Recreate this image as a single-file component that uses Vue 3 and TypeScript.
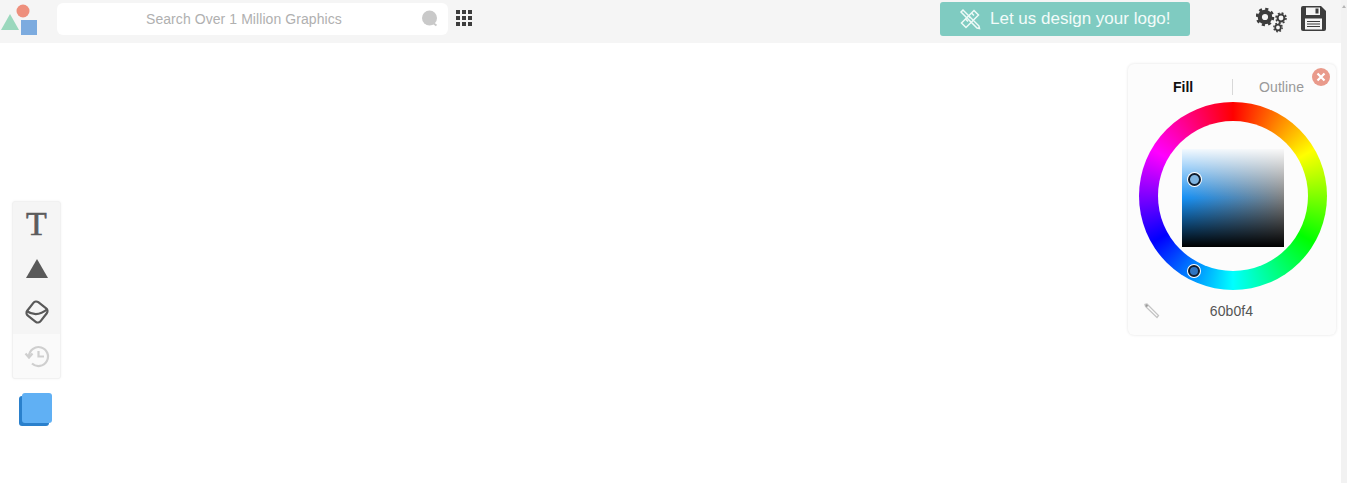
<template>
  <div class="page">
    <!-- top bar -->
    <header class="topbar">
      <svg class="logo" width="38" height="36" viewBox="0 0 38 36">
        <circle cx="23" cy="11" r="6.5" fill="#ee8f7c" />
        <polygon points="1,30 19,30 10,14" fill="#9bd8bd" />
        <rect x="21" y="20" width="16" height="15" fill="#7cabdf" />
      </svg>
      <div class="search">
        <span class="search-text">Search Over 1 Million Graphics</span>
        <svg class="search-icon" width="18" height="18" viewBox="0 0 18 18">
          <circle cx="8.5" cy="8" r="7.5" fill="#c9c9c9" />
          <path d="M12 13 L15.5 15.5" stroke="#c9c9c9" stroke-width="2" />
        </svg>
      </div>
      <div class="grid-icon">
        <i v-for="n in 9" :key="n"></i>
      </div>
      <button class="cta">
        <svg width="22" height="22" viewBox="0 0 22 22" fill="none" stroke="#eefaf7" stroke-width="1.5">
          <path d="M2 4 L4 2 L20 18 L20.5 20.5 L18 20 Z" />
          <path d="M15 2.5 L19.5 7 L7 19.5 L2.5 15 Z" />
          <path d="M12.5 5 L15 7.5 M9.5 8 L11.5 10 M6.5 11 L9 13.5" />
        </svg>
        <span>Let us design your logo!</span>
      </button>
      <svg class="gears" width="32" height="27" viewBox="0 0 32 27">
        <g fill="none" stroke="#3d3d3d">
          <circle cx="9" cy="11" r="5.2" stroke-width="4.2" />
          <circle cx="9" cy="11" r="8" stroke-width="2.6" stroke-dasharray="3.1 3.18" />
          <circle cx="25" cy="12" r="3.4" stroke-width="2" />
          <circle cx="25" cy="12" r="5" stroke-width="1.6" stroke-dasharray="2 1.93" />
          <circle cx="22" cy="21.5" r="2.8" stroke-width="1.8" />
          <circle cx="22" cy="21.5" r="4.2" stroke-width="1.4" stroke-dasharray="1.65 1.65" />
        </g>
      </svg>
      <svg class="save" width="25" height="25" viewBox="0 0 25 25">
        <path d="M2 0 H20 L25 5 V23 Q25 25 23 25 H2 Q0 25 0 23 V2 Q0 0 2 0 Z" fill="#3d3d3d" />
        <rect x="5" y="1.5" width="14" height="7.5" fill="#f5f5f5" />
        <rect x="14.5" y="2.5" width="3" height="5" fill="#3d3d3d" />
        <rect x="4" y="12.5" width="17" height="11" fill="#f5f5f5" />
        <path d="M6 15.5 H19 M6 18 H19 M6 20.5 H19" stroke="#3d3d3d" stroke-width="1.2" />
      </svg>
    </header>

    <!-- canvas area -->
    <main class="workspace">
      <aside class="side">
        <div class="tools">
          <div class="tool">
            <span class="tool-t">T</span>
          </div>
          <div class="tool">
            <svg width="22" height="19" viewBox="0 0 22 19"><polygon points="0,19 22,19 11,0" fill="#595959" /></svg>
          </div>
          <div class="tool">
            <svg width="26" height="26" viewBox="0 0 26 26" fill="none" stroke="#595959" stroke-width="2.2">
              <rect x="4.5" y="4.5" width="17" height="17" rx="3.5" transform="rotate(38 13 13)" />
              <path d="M2.5 12 Q13 19 23.5 10" />
            </svg>
          </div>
          <div class="tool tool-off">
            <svg width="26" height="24" viewBox="0 0 26 24" fill="none" stroke="#cfcfcf" stroke-width="2.2">
              <path d="M5 12 A9.5 9.5 0 1 1 8 19.5" />
              <path d="M1.5 9.5 L5 13.5 L8.5 9.5" />
              <path d="M14.5 7 V12.5 H20" />
            </svg>
          </div>
        </div>
        <div class="swatch"></div>
      </aside>

      <section class="picker">
        <div class="tabs">
          <span class="tab-fill">Fill</span>
          <span class="tab-line"></span>
          <span class="tab-outline">Outline</span>
        </div>
        <button class="close">
          <svg width="10" height="10" viewBox="0 0 10 10"><path d="M1.5 1.5 L8.5 8.5 M8.5 1.5 L1.5 8.5" stroke="#fff" stroke-width="2.2" /></svg>
        </button>
        <div class="wheel">
          <div class="wheel-hole">
            <div class="square">
              <span class="dot dot-sv"></span>
            </div>
          </div>
          <span class="dot dot-hue"></span>
        </div>
        <div class="hex-row">
          <svg class="dropper" width="16" height="16" viewBox="0 0 16 16" fill="none" stroke="#c4c4c4">
            <path d="M1 1.5 L3 1 L14.5 12.5 L13 14.5 L1.5 3.5 Z" stroke-width="1.3" />
            <path d="M2 2 L3.5 3.5" stroke="#999" stroke-width="2" />
          </svg>
          <span class="hex">60b0f4</span>
        </div>
      </section>
    </main>

    <div class="scrollbar"></div>
  </div>
</template>

<script setup lang="ts">
</script>

<style>
html, body {
  margin: 0;
  overflow: hidden;
  background: #fff;
}
</style>

<style scoped>
.page {
  height: 483px;
  display: grid;
  grid-template-columns: 1fr 6px;
  grid-template-rows: 43px 1fr;
  font-family: "Liberation Sans", Arial, sans-serif;
}

.topbar {
  grid-column: 1;
  grid-row: 1;
  display: flex;
  align-items: center;
  background: #f5f5f5;
}

.logo {
  margin-top: -7px;
  flex: none;
}

.search {
  width: 391px;
  height: 32px;
  margin-left: 19px;
  margin-top: -6px;
  background: #fff;
  border-radius: 6px;
  display: flex;
  align-items: center;
  position: relative;
}

.search-text {
  margin-left: 89px;
  font-size: 14px;
  letter-spacing: 0.07px;
  color: #b0b0b0;
}

.search-icon {
  position: absolute;
  left: 364px;
  top: 7px;
}

.grid-icon {
  display: grid;
  grid-template-columns: repeat(3, 4px);
  grid-auto-rows: 4px;
  gap: 2px;
  margin-left: 8px;
  margin-top: -7px;
}

.grid-icon i {
  background: #3d3d3d;
}

.cta {
  width: 250px;
  height: 34px;
  margin-left: 468px;
  margin-top: -5px;
  border: 0;
  border-radius: 3px;
  background: #7fcbc1;
  color: #f2fbf9;
  font-family: inherit;
  font-size: 17px;
  display: flex;
  align-items: center;
  gap: 9px;
  padding: 0 0 0 19px;
}

.gears {
  margin-left: 66px;
  margin-top: -5px;
  flex: none;
}

.save {
  margin-left: 13px;
  margin-top: -6px;
  flex: none;
}

.workspace {
  grid-column: 1;
  grid-row: 2;
  display: flex;
  justify-content: space-between;
  align-items: flex-start;
  background: #fff;
}

.side {
  margin-left: 12px;
  margin-top: 158px;
  width: 49px;
}

.tools {
  width: 47px;
  border: 1px solid #f1f1f1;
  border-radius: 3px;
  box-shadow: 0 0 3px rgba(0, 0, 0, 0.05);
  background: #f5f5f5;
  overflow: hidden;
}

.tool {
  height: 44px;
  display: flex;
  align-items: center;
  justify-content: center;
}

.tool-t {
  font-family: "Liberation Serif", serif;
  font-size: 34px;
  -webkit-text-stroke: 0.6px #5c5c5c;
  color: #5c5c5c;
  line-height: 1;
}

.tool-off {
  background: #fafafa;
}

.swatch {
  width: 30px;
  height: 30px;
  margin-left: 10px;
  margin-top: 14px;
  background: #60b0f4;
  border-radius: 3px;
  box-shadow: -3px 3px 0 #2a80cc;
}

.picker {
  width: 208px;
  height: 271px;
  margin-top: 21px;
  margin-right: 5px;
  background: #fcfcfc;
  border-radius: 6px;
  box-shadow: 0 0 3px rgba(0, 0, 0, 0.12);
  position: relative;
  box-sizing: border-box;
  padding-top: 14px;
}

.tabs {
  display: flex;
  align-items: center;
  height: 17px;
  font-size: 14px;
}

.tab-fill {
  margin-left: 45px;
  width: 59px;
  font-weight: 700;
  color: #111;
  font-size: 14px;
}

.tab-line {
  width: 1px;
  height: 16px;
  background: #d8d8d8;
}

.tab-outline {
  margin-left: 26px;
  letter-spacing: 0.1px;
  color: #999;
}

.close {
  position: absolute;
  left: 184px;
  top: 4px;
  width: 18px;
  height: 18px;
  padding: 0;
  border: 0;
  border-radius: 50%;
  background: #e99a8b;
  display: flex;
  align-items: center;
  justify-content: center;
}

.wheel {
  width: 188px;
  height: 188px;
  margin: 7px 0 0 11px;
  border-radius: 50%;
  background: conic-gradient(#f00, #ff0 60deg, #0f0 120deg, #0ff 180deg, #00f 240deg, #f0f 300deg, #f00);
  display: flex;
  align-items: center;
  justify-content: center;
  position: relative;
}

.wheel-hole {
  width: 150px;
  height: 150px;
  border-radius: 50%;
  background: #fcfcfc;
  display: flex;
  align-items: center;
  justify-content: center;
}

.square {
  width: 102px;
  height: 98px;
  margin-top: 4px;
  position: relative;
  background:
    linear-gradient(to bottom, rgba(255, 255, 255, 0.95) 0%, rgba(255, 255, 255, 0) 50%, rgba(0, 0, 0, 0) 50%, #000 100%),
    linear-gradient(to right, #1590f5, #808080);
}

.dot {
  position: absolute;
  box-sizing: border-box;
  width: 14px;
  height: 14px;
  border-radius: 50%;
  background: #60b0f4;
  border: 2px solid #101c2c;
  box-shadow: 0 0 0 1px #fff;
}

.dot-sv {
  left: 6px;
  top: 24px;
  width: 13px;
  height: 13px;
  background: #7fb4e0;
}

.dot-hue {
  left: 49px;
  top: 163px;
  width: 12px;
  height: 12px;
  background: #2f74c0;
}

.hex-row {
  position: relative;
  margin-top: 13px;
  text-align: center;
  padding-right: 1px;
  font-size: 14px;
  letter-spacing: 0.1px;
  color: #555;
  line-height: 16px;
}

.dropper {
  position: absolute;
  left: 16px;
  top: 0;
}

.scrollbar {
  grid-column: 2;
  grid-row: 1 / 3;
  background: #f2f2f2;
  position: relative;
}

.scrollbar::before {
  content: "";
  position: absolute;
  left: 1px;
  top: 5px;
  border-left: 2px solid transparent;
  border-right: 2px solid transparent;
  border-bottom: 3px solid #b5b5b5;
}
</style>
